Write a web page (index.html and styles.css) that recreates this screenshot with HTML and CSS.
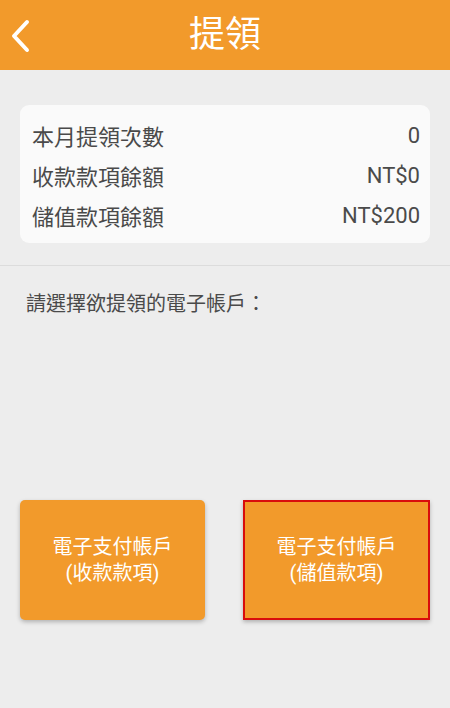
FILE: index.html
```html
<!DOCTYPE html>
<html lang="zh-Hant">
<head>
<meta charset="utf-8">
<link rel="stylesheet" href="styles.css">
</head>
<body>
<div class="app">
  <header class="topbar">
    <svg class="back" width="20" height="34" viewBox="0 0 20 34"><path d="M16 3 L3 17 L16 31" fill="none" stroke="#fff" stroke-width="4" stroke-linecap="round" stroke-linejoin="round"/></svg>
    <h1 class="title">提領</h1>
  </header>
  <section class="summary">
    <div class="card">
      <div class="row"><span>本月提領次數</span><span>0</span></div>
      <div class="row"><span>收款款項餘額</span><span>NT$0</span></div>
      <div class="row"><span>儲值款項餘額</span><span>NT$200</span></div>
    </div>
  </section>
  <p class="prompt">請選擇欲提領的電子帳戶：</p>
  <div class="choices">
    <div class="choice">電子支付帳戶<br>(收款款項)</div>
    <div class="choice selected">電子支付帳戶<br>(儲值款項)</div>
  </div>
</div>
</body>
</html>
```
FILE: styles.css
```css
html, body {
  margin: 0;
  padding: 0;
}
body {
  background: #ededed;
  font-family: Roboto, "Noto Sans CJK TC", sans-serif;
  width: 450px;
  height: 708px;
  overflow: hidden;
}
.app {
  display: flex;
  flex-direction: column;
}
.topbar {
  height: 70px;
  background: #f29a2b;
  display: flex;
  align-items: center;
  justify-content: center;
  position: relative;
}
.back {
  position: absolute;
  left: 11px;
  top: 19px;
}
.title {
  margin: 0;
  color: #fff;
  font-size: 36px;
  font-weight: 400;
  line-height: 44px;
}
.summary {
  padding: 35px 20px 22px;
  border-bottom: 1px solid #dcdcdc;
}
.card {
  background: #fafafa;
  border-radius: 9px;
  padding: 10px 10px 8px 12px;
  display: flex;
  flex-direction: column;
}
.row {
  display: flex;
  justify-content: space-between;
  align-items: center;
  height: 40px;
  font-size: 22px;
  color: #4a4a4a;
}
.prompt {
  margin: 25px 0 0 26px;
  font-size: 20px;
  color: #4a4a4a;
  line-height: 26px;
}
.choices {
  display: grid;
  grid-template-columns: 185px 187px;
  column-gap: 38px;
  padding: 0 20px;
  margin-top: 183px;
}
.choice {
  height: 120px;
  background: #f29a2b;
  border-radius: 5px;
  box-shadow: 0 2px 4px rgba(0,0,0,0.25);
  color: #fff;
  font-size: 20px;
  line-height: 26px;
  text-align: center;
  display: flex;
  align-items: center;
  justify-content: center;
  box-sizing: border-box;
}
.choice.selected {
  border: 2px solid #d90c0c;
  border-radius: 0;
}
```
